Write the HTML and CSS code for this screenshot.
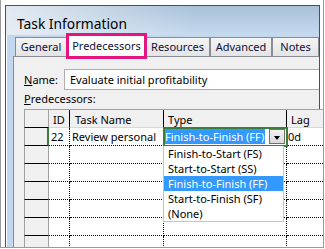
FILE: index.html
```html
<!DOCTYPE html>
<html lang="en">
<head>
    <meta charset="UTF-8">
    <meta name="viewport" content="width=device-width, initial-scale=1.0">
    <title>Task Information</title>
    <link rel="stylesheet" href="styles.css">
</head>
<body>
    <div class="shot">
        <div class="window">
            <div class="titlebar">Task Information</div>
            <div class="client">
                <div class="tabs">
                    <div class="tab tab-general">General</div>
                    <div class="tab tab-active">Predecessors</div>
                    <div class="tab tab-resources">Resources</div>
                    <div class="tab tab-advanced">Advanced</div>
                    <div class="tab tab-notes">Notes</div>
                </div>

                <div class="panel">
                    <div class="name-row">
                        <label class="name-label"><u>N</u>ame:</label>
                        <div class="field">Evaluate initial profitability</div>
                    </div>
                    <div class="pred-label"><u>P</u>redecessors:</div>

                    <table class="grid">
                        <thead>
                            <tr>
                                <th class="rowhead"></th>
                                <th class="col-id">ID</th>
                                <th class="col-name">Task Name</th>
                                <th class="col-type">Type</th>
                                <th class="col-lag">Lag</th>
                            </tr>
                        </thead>
                        <tbody>
                            <tr class="current">
                                <td class="rowhead"></td>
                                <td class="num">22</td>
                                <td>Review personal</td>
                                <td class="type-cell">
                                    <div class="combo">
                                        <span class="sel">Finish-to-Finish (FF)</span>
                                        <span class="drop-btn"><span class="arrow"></span></span>
                                    </div>
                                    <ul class="list">
                                        <li>Finish-to-Start (FS)</li>
                                        <li>Start-to-Start (SS)</li>
                                        <li class="hover">Finish-to-Finish (FF)</li>
                                        <li>Start-to-Finish (SF)</li>
                                        <li>(None)</li>
                                    </ul>
                                </td>
                                <td class="lag">0d</td>
                            </tr>
                            <tr><td class="rowhead"></td><td></td><td></td><td></td><td></td></tr>
                            <tr><td class="rowhead"></td><td></td><td></td><td></td><td></td></tr>
                            <tr><td class="rowhead"></td><td></td><td></td><td></td><td></td></tr>
                            <tr><td class="rowhead"></td><td></td><td></td><td></td><td></td></tr>
                            <tr><td class="rowhead"></td><td></td><td></td><td></td><td></td></tr>
                            <tr><td class="rowhead"></td><td></td><td></td><td></td><td></td></tr>
                        </tbody>
                    </table>
                </div>
            </div>
        </div>
    </div>
</body>
</html>
```

FILE: styles.css
```css
body {
    margin: 0;
    background: #fff;
    font-family: "Noto Sans", sans-serif;
    font-size: 11px;
    color: #000;
}
.shot {
    width: 324px;
    height: 248px;
    box-sizing: border-box;
    border: 1px solid #9a9a9a;
    border-top: none;
    padding: 5px 0 0 4px;
    overflow: hidden;
}
.window {
    width: 315px;
    height: 260px;
    box-sizing: border-box;
    border: 1px solid #4f4f4f;
    border-bottom: none;
    background: #c3d8ee;
    box-shadow: inset 1px 1px 0 #fff;
    display: flex;
    flex-direction: column;
}
.titlebar {
    height: 29px;
    flex: none;
    box-sizing: border-box;
    padding: 9px 0 0 11px;
    line-height: 18px;
    font-size: 13.8px;
    background:
        linear-gradient(90deg, rgba(236, 240, 245, 0.85), rgba(236, 240, 245, 0) 60%),
        linear-gradient(#a9c0d8, #c6daee);
}
.client {
    flex: 1;
    margin-left: 7px;
    display: flex;
    flex-direction: column;
}
.tabs {
    height: 21px;
    flex: none;
    display: flex;
    align-items: flex-end;
    padding-left: 2px;
}
.tab {
    height: 19px;
    box-sizing: border-box;
    border: 1px solid #898c95;
    border-bottom: none;
    background: linear-gradient(#f4f4f4, #e4e4e4);
    font-size: 11px;
    line-height: 18px;
    text-align: center;
    color: #10103a;
}
.tab-general { width: 52px; margin-right: 1px; }
.tab-resources { width: 65px; }
.tab-advanced { width: 62px; }
.tab-notes { width: 47px; }
.tab-active {
    width: 77px;
    height: 22px;
    margin-bottom: -1px;
    position: relative;
    z-index: 1;
    background: #fff;
    line-height: 20px;
    outline: 3px solid #e3157e;
    outline-offset: -1px;
}
.panel {
    flex: 1;
    background: #f0f0f0;
    border-top: 1px solid #898c95;
    border-left: 1px solid #898c95;
    padding-left: 10px;
}
.name-row {
    display: flex;
    align-items: center;
    height: 21px;
    margin-top: 12px;
}
.name-label {
    width: 40px;
}
.field {
    flex: 1;
    height: 21px;
    box-sizing: border-box;
    border: 1px solid #abadb3;
    border-right: none;
    background: #fff;
    padding-left: 5px;
    line-height: 19px;
}
.pred-label {
    margin-top: 2px;
    line-height: 14px;
}
.grid {
    margin-top: 3px;
    border-spacing: 0;
    border-top: 1px solid #a0a0a0;
    table-layout: fixed;
    width: 303px;
}
.grid th,
.grid td {
    box-sizing: border-box;
    height: 18px;
    padding: 0;
    text-align: left;
    font-weight: normal;
    white-space: nowrap;
    border-right: 1px dotted #000;
    border-bottom: 1px dotted #000;
    background: #fff;
}
.grid th {
    background: #f0f0f0;
    border-right: 1px solid #000;
    border-bottom: 1px solid #d8d8d8;
    padding: 1px 0 0 4px;
}
.grid .rowhead {
    width: 25px;
    background: #f0f0f0;
    border-left: 1px solid #a0a0a0;
    border-right: 1px solid #a0a0a0;
    border-bottom: 1px solid #000;
    padding: 0;
}
.grid .col-id { width: 21px; }
.grid .col-name { width: 94px; padding-left: 5px; }
.grid .col-type { width: 123px; }
.grid .col-lag { width: 40px; }
.grid .num,
.current td {
    padding-left: 2px;
}
.current .rowhead {
    border-right: 2px solid #3c7c3c;
}
.current .lag {
    padding-left: 1px;
}
.current .type-cell {
    position: relative;
    padding: 0;
    outline: 2px solid #3c7c3c;
    outline-offset: -1px;
}
.combo {
    display: flex;
    justify-content: space-between;
    height: 17px;
    box-sizing: border-box;
    padding: 1px 1px 1px 0;
}
.sel {
    background: #3399ff;
    color: #fff;
    padding: 0 1px;
    line-height: 15px;
}
.drop-btn {
    width: 16px;
    height: 15px;
    box-sizing: border-box;
    border: 1px solid #707070;
    background: linear-gradient(#f3f3f3, #dadada);
    display: flex;
    align-items: flex-end;
    justify-content: center;
    padding-bottom: 3px;
}
.arrow {
    width: 0;
    height: 0;
    border-left: 3.5px solid transparent;
    border-right: 3.5px solid transparent;
    border-top: 4px solid #000;
}
.list {
    position: absolute;
    left: -1px;
    top: 18px;
    z-index: 2;
    width: 121px;
    box-sizing: border-box;
    margin: 0;
    padding: 0;
    list-style: none;
    background: #fff;
    border: 1px solid #c4c4c4;
    border-top: none;
}
.list li {
    height: 15px;
    line-height: 15px;
    padding-left: 4px;
}
.list .hover {
    background: #3399ff;
    color: #fff;
}
```
